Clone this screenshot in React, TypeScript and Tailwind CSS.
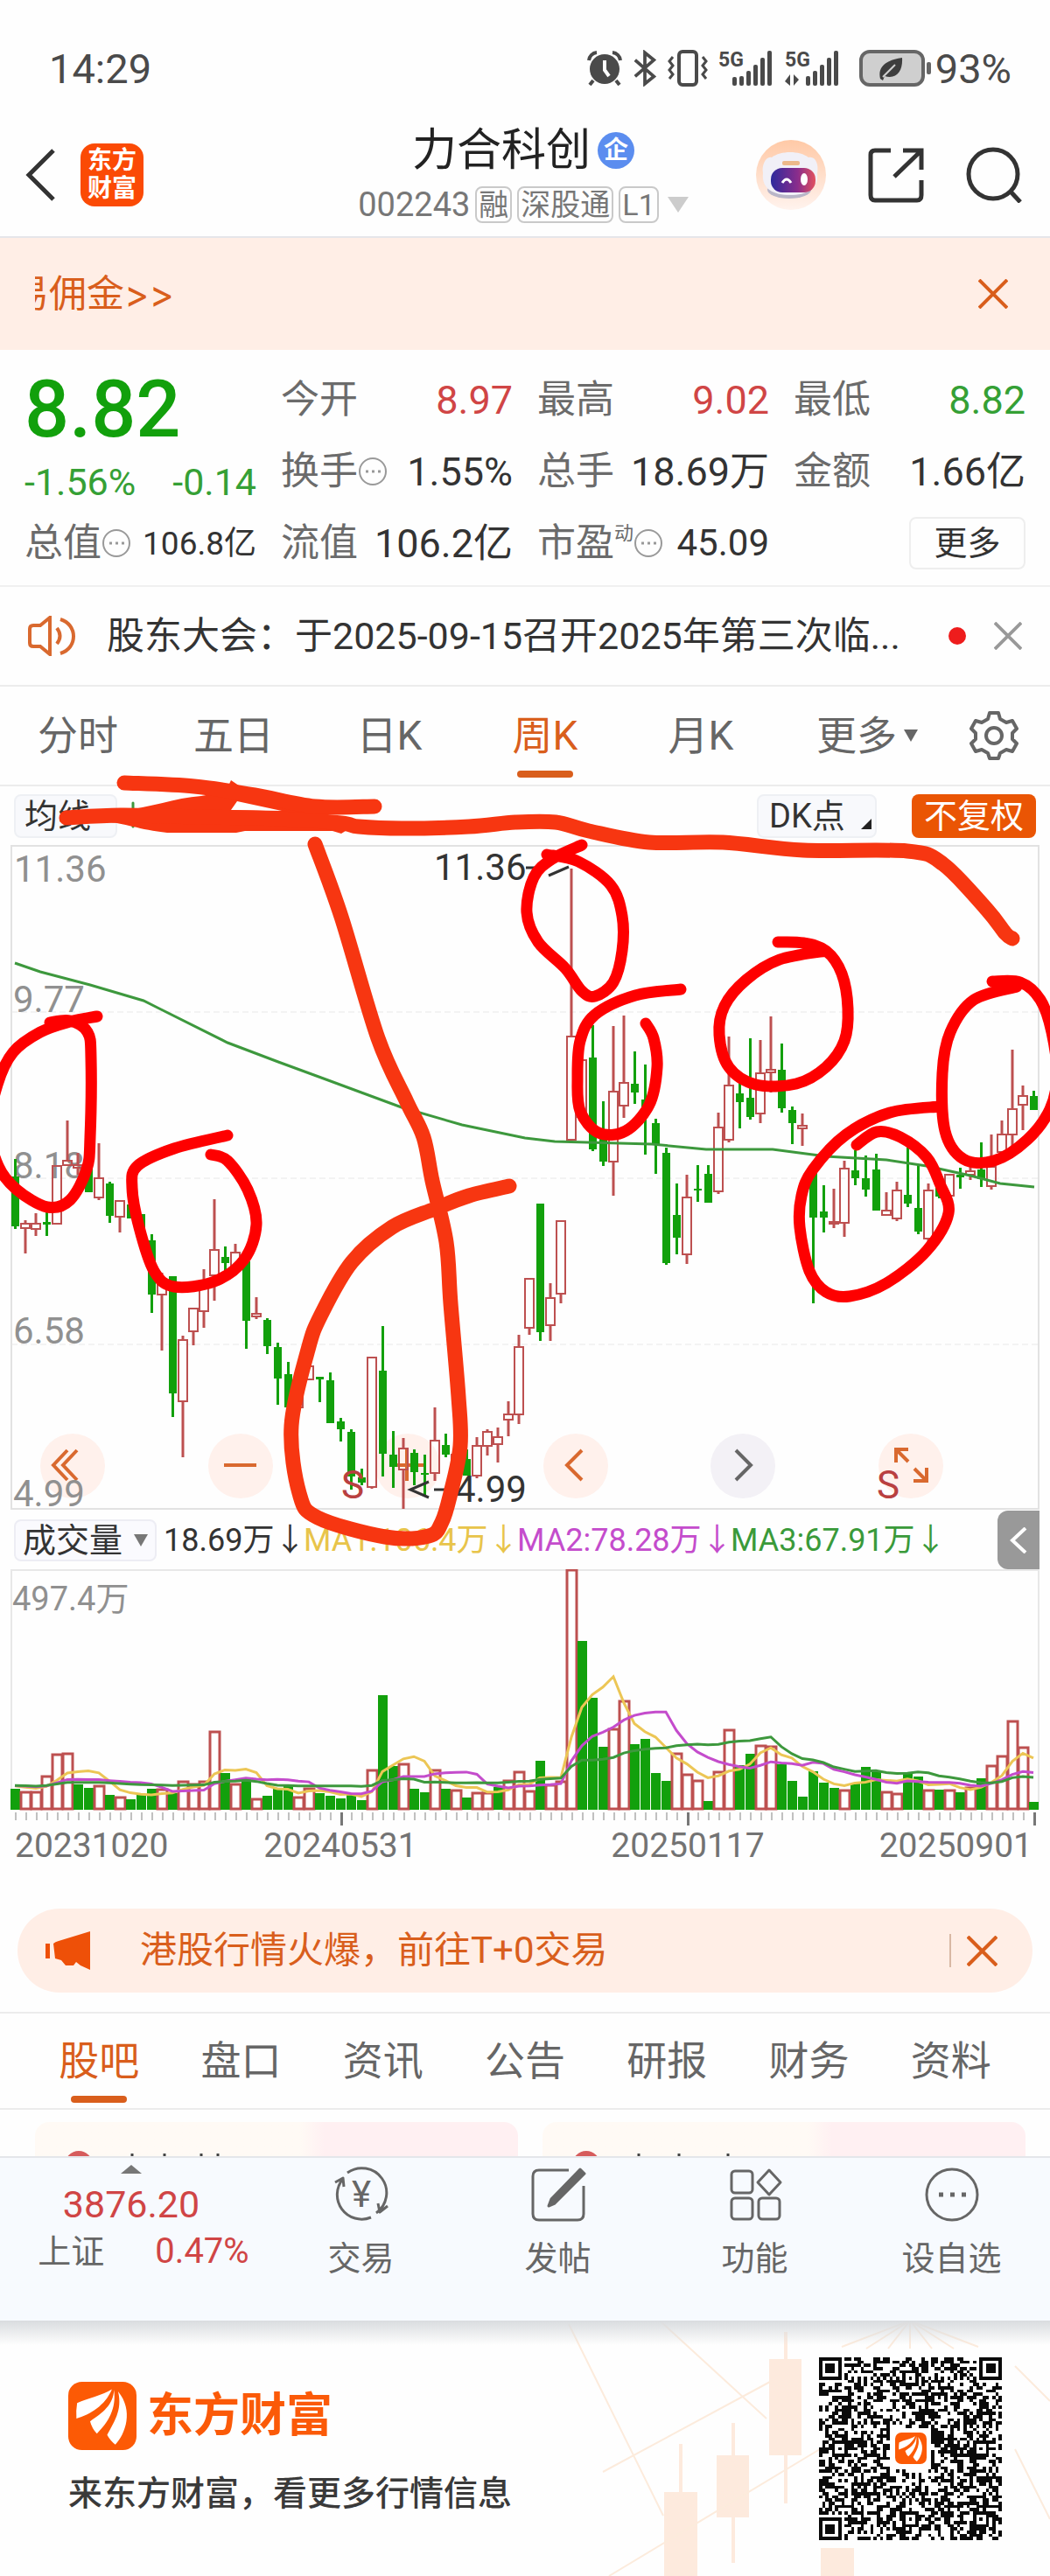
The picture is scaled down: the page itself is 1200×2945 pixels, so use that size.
import React, { useState } from "react";

type Point = [number, number];
// direction, high, body top, body bottom, low
type Candle = ["r" | "g", number, number, number, number];

const UP = "#bd5050";
const DOWN = "#12a00c";
const BAR_STEP = 12;
const BAR_START = 17;
const VOLUME_BASE = 2069;

const candles: Candle[] = [
  ["g", 1325, 1345, 1402, 1405], ["r", 1395, 1399, 1404, 1433], ["r", 1387, 1399, 1405, 1413], ["g", 1385, 1397, 1400, 1413],
  ["r", 1333, 1333, 1399, 1399], ["r", 1281, 1327, 1332, 1332], ["r", 1318, 1332, 1335, 1343], ["g", 1325, 1330, 1363, 1363],
  ["r", 1307, 1347, 1369, 1372], ["g", 1351, 1353, 1390, 1398], ["r", 1373, 1373, 1391, 1409], ["g", 1377, 1377, 1393, 1393],
  ["g", 1388, 1388, 1410, 1410], ["g", 1411, 1418, 1480, 1501], ["r", 1455, 1462, 1480, 1544], ["g", 1459, 1459, 1593, 1620],
  ["r", 1527, 1532, 1602, 1666], ["r", 1496, 1496, 1522, 1538], ["r", 1451, 1472, 1499, 1518], ["r", 1371, 1429, 1458, 1487],
  ["g", 1425, 1437, 1444, 1463], ["r", 1422, 1432, 1447, 1447], ["g", 1442, 1442, 1510, 1542], ["r", 1483, 1502, 1505, 1508],
  ["g", 1507, 1509, 1539, 1548], ["g", 1535, 1540, 1576, 1606], ["g", 1557, 1571, 1609, 1609], ["r", 1583, 1583, 1609, 1609],
  ["r", 1562, 1562, 1577, 1577], ["g", 1574, 1574, 1577, 1603], ["g", 1569, 1578, 1627, 1627], ["g", 1621, 1625, 1634, 1648],
  ["g", 1634, 1637, 1688, 1703], ["g", 1679, 1689, 1695, 1698], ["r", 1552, 1552, 1700, 1702], ["g", 1516, 1567, 1662, 1688],
  ["g", 1636, 1663, 1677, 1701], ["r", 1644, 1656, 1680, 1725], ["g", 1657, 1661, 1683, 1698], ["g", 1663, 1684, 1686, 1709],
  ["r", 1609, 1647, 1684, 1693], ["g", 1639, 1652, 1663, 1666], ["r", 1663, 1663, 1675, 1675], ["g", 1657, 1668, 1687, 1687],
  ["r", 1643, 1653, 1687, 1690], ["r", 1634, 1637, 1653, 1664], ["r", 1632, 1643, 1651, 1672], ["r", 1602, 1617, 1623, 1642],
  ["r", 1526, 1540, 1617, 1628], ["r", 1462, 1462, 1518, 1526], ["g", 1376, 1376, 1523, 1533], ["r", 1467, 1484, 1515, 1533],
  ["r", 1396, 1396, 1479, 1490], ["r", 993, 1185, 1303, 1303], ["r", 1212, 1212, 1277, 1277], ["g", 1172, 1209, 1314, 1316],
  ["g", 1259, 1302, 1328, 1333], ["r", 1173, 1248, 1328, 1367], ["r", 1161, 1238, 1264, 1278], ["g", 1202, 1239, 1249, 1262],
  ["g", 1217, 1257, 1275, 1320], ["g", 1279, 1284, 1308, 1342], ["g", 1312, 1318, 1444, 1446], ["g", 1353, 1389, 1415, 1434],
  ["r", 1343, 1369, 1434, 1445], ["g", 1332, 1359, 1361, 1374], ["g", 1332, 1342, 1375, 1375], ["r", 1272, 1289, 1362, 1365],
  ["r", 1185, 1241, 1303, 1306], ["g", 1238, 1250, 1260, 1290], ["g", 1187, 1255, 1277, 1280], ["r", 1189, 1227, 1273, 1284],
  ["r", 1162, 1223, 1226, 1249], ["g", 1193, 1223, 1267, 1272], ["g", 1265, 1269, 1284, 1308], ["r", 1273, 1287, 1290, 1310],
  ["g", 1335, 1340, 1392, 1490], ["g", 1355, 1385, 1392, 1409], ["r", 1359, 1397, 1399, 1404], ["r", 1327, 1336, 1398, 1414],
  ["g", 1315, 1338, 1347, 1355], ["g", 1321, 1347, 1360, 1368], ["g", 1319, 1337, 1384, 1384], ["r", 1363, 1384, 1389, 1389],
  ["r", 1351, 1361, 1393, 1396], ["g", 1312, 1366, 1376, 1380], ["g", 1332, 1381, 1408, 1411], ["r", 1353, 1361, 1416, 1422],
  ["g", 1353, 1353, 1368, 1370], ["r", 1343, 1343, 1367, 1367], ["g", 1335, 1343, 1346, 1359], ["r", 1332, 1339, 1343, 1349],
  ["g", 1306, 1337, 1348, 1357], ["r", 1297, 1334, 1356, 1360], ["r", 1281, 1297, 1317, 1317], ["r", 1200, 1268, 1297, 1310],
  ["r", 1241, 1253, 1263, 1292], ["g", 1247, 1253, 1269, 1269],
];

const volumes = [
  24, 21, 21, 39, 64, 65, 29, 25, 28, 17, 15, 12, 17, 24, 24, 19, 33, 30, 33, 90, 42, 30, 37, 13, 16, 24, 27, 15, 25, 19, 16, 13, 17, 11,
  46, 131, 50, 53, 24, 20, 46, 24, 23, 14, 20, 20, 26, 34, 44, 22, 56, 29, 33, 275, 193, 128, 72, 93, 125, 75, 81, 42, 33, 65, 41, 34, 10,
  44, 92, 51, 64, 74, 73, 52, 33, 15, 44, 31, 25, 23, 30, 49, 45, 21, 19, 42, 38, 23, 23, 23, 20, 26, 36, 51, 62, 102, 72, 9,
];
const volumeColors =
  "grrrrrggrgrgggrgrrrrgrgrgggrrggggg" +
  "rggrggrgrgrrgrrrgrrrggg" +
  "rrggggrrrgrrggrrggggggrgggrrggrgrgrgrrrrg";

const averageLine: Point[] = [
  [17, 1101], [46, 1111], [103, 1126], [164, 1144], [180, 1152], [260, 1192], [318, 1214], [367, 1232], [413, 1249], [459, 1266],
  [528, 1286], [600, 1301], [634, 1305], [745, 1308], [807, 1314], [883, 1314], [944, 1322], [1013, 1326], [1059, 1333],
  [1109, 1344], [1143, 1353], [1182, 1357],
];

const orangeStrokes: Point[][] = [
  [[142, 895], [222, 899], [291, 909], [360, 922], [428, 922]],
  [[76, 935], [138, 932], [230, 934], [320, 936], [390, 941], [410, 945], [459, 947], [536, 945], [589, 940], [635, 940], [673, 950],
    [742, 963], [826, 963], [918, 972], [1037, 973], [1078, 988], [1128, 1040], [1149, 1067], [1157, 1073]],
  [[360, 965], [390, 1048], [432, 1187], [465, 1260], [484, 1300], [494, 1350], [510, 1420], [515, 1490], [524, 1597], [526, 1653],
    [515, 1707], [505, 1740], [490, 1756], [440, 1757], [363, 1735], [342, 1707], [333, 1630], [352, 1543], [367, 1503], [402, 1443],
    [448, 1403], [497, 1382], [536, 1367], [582, 1356]],
];

const redStrokes: Point[][] = [
  [[111, 1162], [80, 1168], [46, 1180], [15, 1203], [-3, 1240], [-12, 1290], [-2, 1333], [19, 1360], [54, 1380], [80, 1372],
    [99, 1337], [103, 1300], [104, 1210], [100, 1180], [80, 1167], [57, 1169]],
  [[260, 1298], [199, 1313], [157, 1333], [151, 1358], [159, 1403], [176, 1453], [199, 1471], [245, 1465], [279, 1440], [293, 1400],
    [283, 1360], [260, 1327], [241, 1320]],
  [[625, 977], [661, 985], [698, 1012], [711, 1047], [711, 1087], [701, 1123], [680, 1139], [665, 1133], [646, 1107], [615, 1077],
    [602, 1043], [610, 1003], [631, 982], [665, 966]],
  [[778, 1131], [726, 1138], [680, 1160], [663, 1190], [660, 1233], [663, 1270], [684, 1295], [715, 1293], [742, 1263], [751, 1220],
    [747, 1187], [738, 1170]],
  [[889, 1077], [918, 1078], [944, 1087], [962, 1113], [969, 1153], [965, 1190], [944, 1220], [910, 1239], [864, 1240], [833, 1220],
    [822, 1183], [828, 1150], [853, 1120], [891, 1097], [944, 1087]],
  [[1134, 1122], [1166, 1123], [1189, 1143], [1202, 1180], [1208, 1230], [1200, 1268], [1174, 1303], [1136, 1327], [1101, 1325],
    [1080, 1293], [1077, 1227], [1086, 1180], [1113, 1143], [1162, 1128]],
  [[1074, 1265], [1017, 1272], [967, 1297], [929, 1337], [916, 1367], [914, 1403], [925, 1453], [944, 1477], [971, 1482], [1013, 1467],
    [1059, 1430], [1084, 1387], [1074, 1353], [1059, 1323], [1029, 1300], [1002, 1294], [979, 1309]],
];

const smoothPath = (points: Point[]) =>
  points.reduce((d, [x, y], i) => {
    if (i === 0) return `M${x} ${y}`;
    const a = points[i - 2] ?? points[i - 1];
    const b = points[i - 1];
    const c = points[i + 1] ?? points[i];
    return `${d}C${b[0] + (x - a[0]) / 6} ${b[1] + (y - a[1]) / 6} ${x - (c[0] - b[0]) / 6} ${y - (c[1] - b[1]) / 6} ${x} ${y}`;
  }, "");

const movingAverage = (size: number) =>
  volumes
    .map((_, i) => {
      let sum = 0;
      for (let k = i - size + 1; k <= i; k++) sum += k < 0 ? 28 : volumes[k];
      return `${BAR_START + i * BAR_STEP},${VOLUME_BASE - sum / size}`;
    })
    .join(" ");

const barX = (i: number) => BAR_START + i * BAR_STEP;

const BrandMark = ({ className }: { className: string }) => (
  <svg viewBox="0 0 100 100" className={className} aria-hidden="true">
    <rect width="100" height="100" rx="20" fill="#fc5a05" />
    <g fill="#fff">
      <path d="M64 11C50 20 26 25 13 31q-2 12-1 23C32 48 54 35 64 11Z" />
      <path d="M67 12C66 34 50 46 32 58q3 11 10 18C58 60 71 40 67 12Z" />
      <path d="M73 14C80 42 66 60 57 78q5 9 12 14C84 76 96 42 73 14Z" />
    </g>
  </svg>
);

const Signal = ({ data = false }: { data?: boolean }) => (
  <svg viewBox="0 0 64 42" className="h-[42px] w-16 overflow-visible" fill="#4a4a4a" aria-hidden="true">
    <text x="0" y="19" fontSize="23" fontWeight="700">5G</text>
    {[16, 24, 32, 40, 48, 56].map((x, i) =>
      i === 0 ? null : (
        <rect key={x} x={x} y={[30, 30, 24, 17, 9, 1][i]} width="5" height={[11, 11, 17, 24, 32, 40][i]} rx="2" />
      )
    )}
    {data ? <path d="M6 28v13L0 36M10 41V28l6 6" /> : <rect x="16" y="31" width="5" height="10" rx="2" />}
  </svg>
);

const StatusBar = () => (
  <div className="flex h-[130px] items-center justify-between pl-[56px] pr-11 pt-[26px] text-[47px] leading-none text-[#4a4a4a]">
    <span>14:29</span>
    <div className="flex items-center gap-3">
      <svg viewBox="0 0 40 40" className="size-10" aria-hidden="true">
        <circle cx="20" cy="21" r="17" fill="#4a4a4a" />
        <path d="M2 11a10 10 0 0 1 9-9M38 11a10 10 0 0 0-9-9M7 34l-4 5M33 34l4 5" stroke="#4a4a4a" strokeWidth="4" fill="none" />
        <path d="M20 11v11l5 7" stroke="#fff" strokeWidth="4" fill="none" />
      </svg>
      <svg viewBox="0 0 30 42" className="h-[42px] w-7" fill="none" stroke="#4a4a4a" strokeWidth="4" aria-hidden="true">
        <path d="M3 11l23 20-11 9V2l11 9L3 31" />
      </svg>
      <svg viewBox="0 0 46 42" className="h-[42px] w-[46px]" fill="none" stroke="#4a4a4a" strokeWidth="4" aria-hidden="true">
        <rect x="13" y="2" width="20" height="38" rx="4" />
        <path d="M6 8L2 13l4 5-4 5 4 5-4 5M40 8l4 5-4 5 4 5-4 5 4 5" strokeWidth="3" />
      </svg>
      <Signal />
      <Signal data />
      <div className="ml-2 flex items-center gap-1">
        <svg viewBox="0 0 84 42" className="h-[42px] w-[84px]" aria-hidden="true">
          <rect x="3" y="2" width="71" height="38" rx="10" fill="#cfcfcf" stroke="#666" strokeWidth="4" />
          <rect x="78" y="14" width="5" height="14" rx="2" fill="#666" />
          <path d="M25 33c-3-12 4-21 25-24 1 15-6 25-20 21l-2 5Z" fill="#3d3d3d" />
          <path d="M28 31l14-14" stroke="#cfcfcf" strokeWidth="2" />
        </svg>
        <span>93%</span>
      </div>
    </div>
  </div>
);

const Tag = ({ children }: { children: React.ReactNode }) => (
  <span className="rounded-lg border-2 border-[#c9c9c9] px-0.5 text-[34px] leading-[38px]">{children}</span>
);

const Header = () => (
  <header className="grid h-[142px] grid-cols-[1fr_auto_1fr] items-center border-b-2 border-[#e6e6ea] pl-7 pr-8">
    <div className="flex items-center gap-7">
      <button aria-label="返回">
        <svg viewBox="0 0 36 60" className="h-[60px] w-9" fill="none" stroke="#333" strokeWidth="5" aria-hidden="true">
          <path d="M33 2L5 30l28 28" />
        </svg>
      </button>
      <a href="#home" className="grid size-[72px] place-content-center rounded-2xl bg-[#fb4a05] text-center text-[28px] font-bold leading-8 text-white">
        东方
        <br />
        财富
      </a>
    </div>
    <div className="flex flex-col items-center gap-2">
      <h1 className="flex items-center gap-2 text-[51px] leading-[60px] text-[#222]">
        力合科创
        <span className="grid size-[42px] place-items-center rounded-full bg-[#5b8def] text-[28px] font-bold leading-none text-white">企</span>
      </h1>
      <div className="flex h-12 items-center gap-1.5 text-[38px] leading-none text-[#777]">
        <span>002243</span>
        <Tag>融</Tag>
        <Tag>深股通</Tag>
        <Tag>L1</Tag>
        <svg viewBox="0 0 24 18" className="ml-1 h-[18px] w-6" fill="#ccc" aria-hidden="true">
          <path d="M0 0h24L12 18z" />
        </svg>
      </div>
    </div>
    <div className="flex items-center justify-end gap-12">
      <button aria-label="智能助手">
        <svg viewBox="0 0 80 80" className="size-20" aria-hidden="true">
          <defs>
            <linearGradient id="halo" x1="0" y1="0" x2="0" y2="1">
              <stop offset="0" stopColor="#ffc9a6" />
              <stop offset="1" stopColor="#fff3ee" />
            </linearGradient>
            <linearGradient id="visor" x1="0" y1="0" x2="1" y2="0">
              <stop offset="0" stopColor="#2d2a9c" />
              <stop offset="0.6" stopColor="#8a2d8c" />
              <stop offset="1" stopColor="#e2515e" />
            </linearGradient>
          </defs>
          <circle cx="40" cy="40" r="40" fill="url(#halo)" />
          <ellipse cx="38" cy="57" rx="25" ry="10" fill="#b9b6c8" />
          <path d="M8 38c-2-10 4-20 10-18 10-8 32-8 42 0 8-2 12 8 10 18 2 18-12 25-31 25S6 56 8 38Z" fill="#f1f0f7" />
          <rect x="30" y="24" width="20" height="5" rx="2" fill="#ecb98a" />
          <rect x="17" y="32" width="51" height="28" rx="13" fill="url(#visor)" />
          <path d="M30 49q5-8 10 0" fill="none" stroke="#fff" strokeWidth="3" />
          <ellipse cx="55" cy="45" rx="4" ry="7" fill="#fff" />
        </svg>
      </button>
      <button aria-label="分享">
        <svg viewBox="0 0 64 64" className="size-16" fill="none" stroke="#333" strokeWidth="5" aria-hidden="true">
          <path d="M26 4H8q-5 0-5 5v46q0 6 5 6h48q5 0 5-6V38M40 4h21v22M60 5L30 34" />
        </svg>
      </button>
      <button aria-label="搜索">
        <svg viewBox="0 0 64 64" className="size-16" fill="none" stroke="#333" strokeWidth="5" aria-hidden="true">
          <circle cx="31" cy="31" r="28" />
          <path d="M50 50l12 13" />
        </svg>
      </button>
    </div>
  </header>
);

const Cross = ({ className }: { className: string }) => (
  <svg viewBox="0 0 34 34" className={className} fill="none" stroke="currentColor" strokeWidth="4" aria-hidden="true">
    <path d="M1 1l32 32M33 1L1 33" />
  </svg>
);

const Info = () => (
  <svg viewBox="0 0 34 34" className="size-[34px] shrink-0" fill="none" stroke="#999" strokeWidth="2" aria-hidden="true">
    <circle cx="17" cy="17" r="15" />
    <path d="M9 17h3M16 17h3M23 17h3" strokeWidth="3" />
  </svg>
);

interface StatProps {
  label: React.ReactNode;
  value: string;
  tone?: string;
  size?: string;
}

const Stat = ({ label, value, tone = "text-[#333]", size = "text-[45px]" }: StatProps) => (
  <div className="flex h-[82px] items-center justify-between whitespace-nowrap">
    <dt className="flex items-center text-[44px] text-[#6b6b6b]">{label}</dt>
    <dd className={`${size} ${tone}`}>{value}</dd>
  </div>
);

const Quote = () => (
  <section className="border-b-2 border-[#f0f0f0] px-7 pb-[7px] pt-4 leading-none">
    <dl className="grid grid-cols-4 gap-x-7">
      <div>
        <div className="flex h-[106px] items-center text-[90px] font-medium text-[#12a00c]">8.82</div>
        <div className="flex h-[58px] items-center justify-between text-[43px] text-[#35a035]">
          <span>-1.56%</span>
          <span>-0.14</span>
        </div>
        <Stat label={<>总值<Info /></>} value="106.8亿" size="text-[37px]" />
      </div>
      <div>
        <Stat label="今开" value="8.97" tone="text-[#d04545]" />
        <Stat label={<>换手<Info /></>} value="1.55%" />
        <Stat label="流值" value="106.2亿" />
      </div>
      <div>
        <Stat label="最高" value="9.02" tone="text-[#d04545]" />
        <Stat label="总手" value="18.69万" />
        <Stat label={<>市盈<sup className="text-[22px]">动</sup><Info /></>} value="45.09" size="text-[42px]" />
      </div>
      <div>
        <Stat label="最低" value="8.82" tone="text-[#35a035]" />
        <Stat label="金额" value="1.66亿" />
        <div className="flex h-[82px] items-center justify-end">
          <button className="h-[60px] w-[133px] rounded-lg border-2 border-[#eee] text-[38px] text-[#333]">更多</button>
        </div>
      </div>
    </dl>
  </section>
);

const Notice = () => (
  <section className="flex h-[114px] items-center border-b-2 border-[#ececec] px-8 text-[43px] leading-none text-[#333]">
    <svg viewBox="0 0 56 46" className="h-[46px] w-14 shrink-0" fill="none" stroke="#d9692f" strokeWidth="4" aria-hidden="true">
      <path d="M25 2L14 11H6q-4 0-4 4v16q0 4 4 4h8l11 9ZM33 14q7 9 0 18M37 4c20 6 20 33 0 39" />
    </svg>
    <p className="ml-[34px] grow whitespace-nowrap">股东大会：于2025-09-15召开2025年第三次临...</p>
    <span className="mr-8 size-5 shrink-0 rounded-full bg-[#ee1c1c]" />
    <button aria-label="关闭公告" className="text-[#999]">
      <Cross className="size-8" />
    </button>
  </section>
);

const periods = ["分时", "五日", "日K", "周K", "月K"];

const PeriodTabs = () => {
  const [active, setActive] = useState("周K");
  return (
    <nav className="grid h-[114px] grid-cols-[178fr_178fr_178fr_178fr_178fr_202fr_108fr] items-stretch border-b-2 border-[#ececec] text-[46px] leading-none text-[#666]">
      {periods.map((p) => (
        <button key={p} onClick={() => setActive(p)} className={`relative ${active === p ? "text-[#d95e1c]" : ""}`}>
          {p}
          {active === p && <span className="absolute bottom-2 left-1/2 h-2 w-16 -translate-x-1/2 rounded-full bg-[#d95e1c]" />}
        </button>
      ))}
      <button className="flex items-center justify-center gap-2">
        更多
        <svg viewBox="0 0 16 14" className="h-3.5 w-4" fill="#666" aria-hidden="true">
          <path d="M0 0h16L8 14z" />
        </svg>
      </button>
      <button aria-label="设置" className="pl-4">
        <svg viewBox="0 0 56 56" className="size-14" fill="none" stroke="#666" strokeWidth="4" strokeLinejoin="round" aria-hidden="true">
          <path d="M23 2h10l2 7 7 4 7-2 5 9-5 5v7l5 5-5 9-7-2-7 4-2 6H23l-2-6-7-4-7 2-5-9 5-5v-7l-5-5 5-9 7 2 7-4Z" />
          <circle cx="28" cy="28" r="9" />
        </svg>
      </button>
    </nav>
  );
};

const controls = [
  { label: "最早", d: "M31 19L15 36l16 17M42 19L26 36l16 17", muted: false },
  { label: "缩小", d: "M18 36h37", muted: false },
  { label: "放大", d: "M18 36h37M36 18v36", muted: false },
  { label: "向左", d: "M44 19L27 36l17 17", muted: false },
  { label: "向右", d: "M29 19l17 17-17 17", muted: true },
  { label: "全屏", d: "M34 18H20v15M20 18l14 14M40 54h15V39M55 54L41 40", muted: false },
];

const PriceChart = () => (
  <div className="relative">
    <div className="absolute inset-x-0 bottom-[14px] flex justify-between pl-[46px] pr-[122px]">
      {controls.map(({ label, d, muted }) => (
        <button key={label} aria-label={label} className={`size-[74px] rounded-full ${muted ? "bg-[#f3f1f6]" : "bg-[#fff1ec]"}`}>
          <svg viewBox="0 0 74 74" fill="none" stroke={muted ? "#666" : "#d9692f"} strokeWidth="4" aria-hidden="true">
            <path d={d} />
          </svg>
        </button>
      ))}
    </div>
    <svg viewBox="0 966 1200 761" className="pointer-events-none relative block w-full" fontSize="42" role="img" aria-label="周K线图">
      <rect x="13" y="967" width="1174" height="758" fill="none" stroke="#e2e2e2" strokeWidth="2" />
      <path d="M13 1157H1187M13 1347H1187M13 1537H1187" stroke="#e8e8e8" strokeWidth="1" strokeDasharray="7 4" />
      <g fill="#909090">
        <text x="16" y="1008">11.36</text>
        <text x="15" y="1157">9.77</text>
        <text x="15" y="1347">8.18</text>
        <text x="15" y="1536">6.58</text>
        <text x="15" y="1722">4.99</text>
      </g>
      {candles.map(([dir, high, top, bottom, low], i) => {
        const x = barX(i);
        const height = Math.max(bottom - top, 2);
        return dir === "g" ? (
          <g key={i} fill={DOWN}>
            <rect x={x - 1} y={high} width="3" height={low - high} />
            <rect x={x - 4} y={top} width="9" height={height} />
          </g>
        ) : (
          <g key={i} fill="none" stroke={UP} strokeWidth="2">
            <path d={`M${x} ${high}V${top}M${x} ${bottom}V${low}`} strokeWidth="3" />
            <rect x={x - 5} y={top} width="10" height={height} />
          </g>
        );
      })}
      <polyline points={averageLine.join(" ")} fill="none" stroke="#3d983d" strokeWidth="3" />
      <g fill="#333">
        <text x="496" y="1006">11.36</text>
        <text x="520" y="1717">4.99</text>
      </g>
      <path d="M601 992h14M627 1001l23-10M490 1694l-21 9 21 9M496 1703h16" fill="none" stroke="#333" strokeWidth="3" />
      <g fill="#b94040" fontSize="44">
        <text x="390" y="1713">S</text>
        <text x="1002" y="1713">S</text>
      </g>
    </svg>
  </div>
);

const VolumeHeader = () => (
  <div className="flex h-[67px] items-center justify-between pl-4 pr-3 text-[36px] leading-none">
    <div className="flex items-center whitespace-nowrap">
      <button className="mr-2 flex h-12 w-[163px] items-center justify-between rounded-lg border-2 border-[#ededf4] bg-[#fafafe] px-2 text-[38px] text-[#333]">
        成交量
        <svg viewBox="0 0 16 14" className="h-3.5 w-4" fill="#777" aria-hidden="true">
          <path d="M0 0h16L8 14z" />
        </svg>
      </button>
      <span className="w-40 text-[#333]">18.69万↓</span>
      <span className="w-[244px] text-[#e8c44a]">MA1:106.4万↓</span>
      <span className="w-[244px] text-[#c44ccc]">MA2:78.28万↓</span>
      <span className="text-[#3a9a3a]">MA3:67.91万↓</span>
    </div>
    <button aria-label="展开" className="grid h-full w-12 place-items-center rounded-l-xl bg-[#999] text-white">
      <svg viewBox="0 0 20 30" className="h-[30px] w-5" fill="none" stroke="currentColor" strokeWidth="4" aria-hidden="true">
        <path d="M18 1L3 15l15 14" />
      </svg>
    </button>
  </div>
);

const VolumeChart = () => (
  <svg viewBox="0 1794 1200 336" className="block w-full" fontSize="38" role="img" aria-label="成交量图">
    <path d="M13 2069V1795H1187V2069" fill="none" stroke="#e8e8e8" strokeWidth="2" />
    <text x="14" y="1841" fill="#909090">497.4万</text>
    {volumes.map((v, i) =>
      volumeColors[i] === "g" ? (
        <rect key={i} x={barX(i) - 5} y={VOLUME_BASE - v} width="11" height={v} fill={DOWN} />
      ) : (
        <rect key={i} x={barX(i) - 5} y={VOLUME_BASE - v + 1} width="11" height={v - 2} fill="#fff" stroke={UP} strokeWidth="3" />
      )
    )}
    <g fill="none" strokeWidth="3">
      <polyline points={movingAverage(5)} stroke="#ecc655" />
      <polyline points={movingAverage(10)} stroke="#c44ccc" />
      <polyline points={movingAverage(20)} stroke="#3d983d" />
    </g>
    {volumes.map((_, i) => {
      const major = i === 31 || i === 64 || i === 97;
      return <rect key={i} x={barX(i)} y="2072" width={major ? 3 : 2} height={major ? 15 : 9} fill={major ? "#777" : "#c0c0c0"} />;
    })}
    <g fill="#737373" fontSize="39">
      <text x="17" y="2123">20231020</text>
      <text x="389" y="2123" textAnchor="middle">20240531</text>
      <text x="786" y="2123" textAnchor="middle">20250117</text>
      <text x="1180" y="2123" textAnchor="end">20250901</text>
    </g>
  </svg>
);

const PenMarks = () => (
  <svg
    viewBox="0 899 1200 895"
    className="pointer-events-none absolute left-0 top-0 w-full overflow-visible"
    fill="none"
    strokeLinecap="round"
    strokeLinejoin="round"
    aria-hidden="true"
  >
    <path d="M152 918v27" stroke="#3d983d" strokeWidth="3" />
    <path
      d="M80 927L138 927C170 924 200 912 230 910L258 905L264 892L292 911L406 943L390 953L380 950L280 950L270 952H191C160 949 140 940 122 940Z M271 916L264 926L322 927Z"
      fill="#f73611"
      fillRule="evenodd"
    />
    <g stroke="#f73611" strokeWidth="17">
      {orangeStrokes.map((s, i) => (
        <path key={i} d={smoothPath(s)} />
      ))}
    </g>
    <g stroke="#fe0000" strokeWidth="13">
      {redStrokes.map((s, i) => (
        <path key={i} d={smoothPath(s)} />
      ))}
    </g>
  </svg>
);

const ChartArea = () => (
  <section>
    <div className="relative">
      <div className="flex h-[67px] items-center px-4 text-[38px] leading-none text-[#333]">
        <button className="h-[50px] rounded-lg border-2 border-[#eef0f4] bg-[#f8f9fc] pl-2.5 pr-7">均线</button>
        <button className="ml-auto flex h-[50px] w-[137px] items-end justify-between rounded-lg border-2 border-[#eef0f4] bg-[#f8f9fc] pb-1 pl-3 pr-1">
          DK点
          <svg viewBox="0 0 12 12" className="mb-1 size-3" fill="#222" aria-hidden="true">
            <path d="M12 0v12H0z" />
          </svg>
        </button>
        <button className="ml-10 h-[50px] rounded-lg bg-[#ea5504] px-[14px] text-white">不复权</button>
      </div>
      <PriceChart />
      <VolumeHeader />
      <PenMarks />
    </div>
    <VolumeChart />
  </section>
);

const Promo = () => (
  <div className="mx-5 mb-[22px] mt-[52px] flex h-24 items-center rounded-full bg-[#ffeee6] pl-8 pr-10 text-[42px] leading-none text-[#d95e1c]">
    <svg viewBox="0 0 52 44" className="h-11 w-[52px]" fill="#ee5008" aria-hidden="true">
      <path d="M0 14h5v17H0zM9 14q2-2 6-3L51 0v44l-11-5-5-4-3 4h-9l-5-6-7-2Z" />
    </svg>
    <a href="#trade" className="ml-14 grow">港股行情火爆，前往T+0交易</a>
    <span className="mr-[18px] h-[38px] w-0.5 bg-[#d9b8a4]" />
    <button aria-label="关闭推广">
      <Cross className="size-[35px]" />
    </button>
  </div>
);

const sections = ["股吧", "盘口", "资讯", "公告", "研报", "财务", "资料"];

const SectionTabs = () => {
  const [active, setActive] = useState("股吧");
  return (
    <nav className="grid h-[112px] grid-cols-7 border-y-2 border-[#ececec] px-8 text-[46px] leading-none text-[#666]">
      {sections.map((s) => (
        <button key={s} onClick={() => setActive(s)} className={`relative ${active === s ? "text-[#d95e1c]" : ""}`}>
          {s}
          {active === s && <span className="absolute bottom-1.5 left-1/2 h-2 w-16 -translate-x-1/2 rounded-full bg-[#d95e1c]" />}
        </button>
      ))}
    </nav>
  );
};

const Cards = () => (
  <div className="grid h-[53px] grid-cols-2 gap-7 overflow-hidden pl-10 pr-7 pt-[14px]">
    {[0, 1].map((i) => (
      <div key={i} className="h-24 rounded-2xl bg-linear-to-r from-[#fffaf5] from-55% to-[#fff0f2] to-60% pl-[34px] pt-[33px]">
        <svg viewBox="0 0 190 32" className="h-8 w-[190px]" aria-hidden="true">
          <circle cx="16" cy="16" r="16" fill="#d65c5c" />
          <path d={i ? "M76 3v8M122 3v8M178 3v8" : "M77 3v8M114 3v8M156 3v8M175 3v8"} stroke="#444" strokeWidth="3" />
        </svg>
      </div>
    ))}
  </div>
);

const actions = [
  {
    label: "交易",
    icon: (
      <>
        <path d="M16 7a28 28 0 0 1 33 46M43 58A28 28 0 0 1 11 14M2 18l9-5 1 10M62 45l-9 7-2-10" />
        <text x="32" y="46" textAnchor="middle" fontSize="42" fill="#666" stroke="none">¥</text>
      </>
    ),
  },
  {
    label: "发帖",
    icon: (
      <>
        <path d="M44 4H10q-7 0-7 7v43q0 7 7 7h44q7 0 7-7V22" />
        <path d="M57 3l5 5-34 34-7 3 3-8Z" fill="#666" />
      </>
    ),
  },
  {
    label: "功能",
    icon: (
      <>
        <rect x="5" y="5" width="24" height="25" rx="4" />
        <rect x="5" y="36" width="24" height="24" rx="4" />
        <rect x="36" y="36" width="24" height="24" rx="4" />
        <path d="M48 4l13 14-13 14-13-14Z" />
      </>
    ),
  },
  {
    label: "设自选",
    icon: (
      <>
        <circle cx="32" cy="32" r="29" />
        <path d="M17 32h5M30 32h5M43 32h5" strokeWidth="5" />
      </>
    ),
  },
];

const BottomBar = () => (
  <nav className="flex h-[188px] border-t-2 border-[#e4e6ea] bg-[#f7fafe] text-[38px] leading-none text-[#666]">
    <button className="flex w-1/4 flex-col items-center pt-2">
      <svg viewBox="0 0 24 10" className="h-2.5 w-6" fill="#777" aria-hidden="true">
        <path d="M0 10h24L12 0z" />
      </svg>
      <span className="mt-[14px] text-[43px] text-[#d04545]">3876.20</span>
      <span className="mt-3 flex items-center gap-[58px] pl-7">
        上证 <span className="text-[40px] text-[#d04545]">0.47%</span>
      </span>
    </button>
    {actions.map(({ label, icon }) => (
      <button key={label} className="flex flex-1 flex-col items-center gap-[22px] pt-[10px]">
        <svg viewBox="0 0 64 64" className="size-16" fill="none" stroke="#666" strokeWidth="3" strokeLinejoin="round" aria-hidden="true">
          {icon}
        </svg>
        {label}
      </button>
    ))}
  </nav>
);

const QR_SIZE = 57;

const inSquare = (x: number, y: number, cx: number, cy: number, r: number) => Math.max(Math.abs(x - cx), Math.abs(y - cy)) <= r;

const buildQr = () => {
  let seed = 20250915;
  let d = "";
  for (let y = 0; y < QR_SIZE; y++) {
    for (let x = 0; x < QR_SIZE; x++) {
      seed = (seed * 1103515245 + 12345) % 2147483648;
      let on = seed / 2147483648 < 0.5;
      if (x === 6 || y === 6) on = (x + y) % 2 === 0;
      for (const [cx, cy] of [[28, 6], [6, 28], [50, 28], [28, 50], [50, 50]]) {
        if (inSquare(x, y, cx, cy, 2)) on = !inSquare(x, y, cx, cy, 1) || (x === cx && y === cy);
      }
      for (const [cx, cy] of [[3, 3], [53, 3], [3, 53]]) {
        if (inSquare(x, y, cx, cy, 4)) {
          const ring = Math.max(Math.abs(x - cx), Math.abs(y - cy));
          on = ring === 3 || ring <= 1;
        }
      }
      if (inSquare(x, y, 28, 28, 6)) on = false;
      if (on) d += `M${x} ${y}h1v1h-1z`;
    }
  }
  return d;
};

const qrPath = buildQr();

const Footer = () => (
  <footer className="relative flex h-[292px] items-center justify-between pl-[78px] pr-[55px]">
    <svg viewBox="640 2653 560 292" className="absolute right-0 top-0 h-full" fill="#fdeadd" stroke="#fcebdc" strokeWidth="2" aria-hidden="true">
      <g stroke="none">
        <path d="M896 2666h4v196h-4zM836 2770h4v160h-4zM776 2794h4v70h-4z" />
        <path d="M879 2697h37v110h-37zM819 2807h37v71h-37zM759 2849h38v96h-38zM938 2913h38v32h-38z" />
      </g>
      <path d="M754 2653l122 112M689 2826l191-103M696 2945l241-145M650 2657l108 219M1040 2653l-78 30M1040 2653l-50 32M1040 2653l-25 32M1040 2653v32M1040 2653l25 32M1040 2653l50 32M1040 2653l78 30M1160 2705l40 40M1160 2800l40 80" fill="none" />
    </svg>
    <div className="absolute inset-x-0 top-0 h-7 bg-linear-to-b from-[#d9dcdf] to-transparent" />
    <div className="relative">
      <div className="flex items-center gap-3">
        <BrandMark className="size-[78px]" />
        <span className="text-[53px] font-bold leading-none text-[#fb5a08]">东方财富</span>
      </div>
      <p className="mt-[26px] text-[39px] font-medium leading-[48px] text-[#3a3a3a]">来东方财富，看更多行情信息</p>
    </div>
    <div className="relative grid place-items-center">
      <svg viewBox="0 0 57 57" className="size-[209px] bg-white" shapeRendering="crispEdges" role="img" aria-label="二维码">
        <path d={qrPath} fill="#0a0a0a" />
      </svg>
      <BrandMark className="absolute size-9" />
    </div>
  </footer>
);

export default function App() {
  return (
    <main className="w-full overflow-hidden bg-[#fefefe] font-[Roboto,'Noto_Sans_CJK_SC',sans-serif]">
      <StatusBar />
      <Header />
      <div className="flex h-32 items-center justify-between bg-[#ffeee6] pl-10 pr-12 text-[43px] leading-none text-[#d95e1c]">
        <a href="#open" className="flex">
          <span className="flex w-4 justify-end overflow-hidden">易</span>
          佣金<span className="font-[Inter,sans-serif]">&gt;&gt;</span>
        </a>
        <button aria-label="关闭横幅">
          <Cross className="size-[34px]" />
        </button>
      </div>
      <Quote />
      <Notice />
      <PeriodTabs />
      <ChartArea />
      <Promo />
      <SectionTabs />
      <Cards />
      <BottomBar />
      <Footer />
    </main>
  );
}
